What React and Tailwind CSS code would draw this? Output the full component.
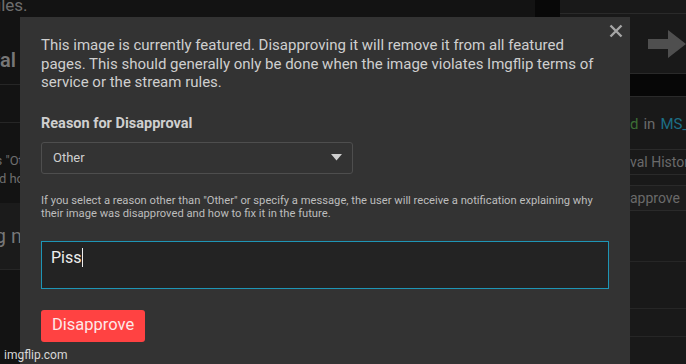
import React from "react";

const App = () => {
  return (
    <div
      className="relative w-[686px] h-[364px] overflow-hidden bg-[#131313]"
      style={{ fontFamily: "Roboto, 'Liberation Sans', sans-serif" }}
    >
      {/* page behind the modal */}
      <div className="flex h-full">
        <div className="w-[535px] shrink-0 text-[#6e6e6e]">
          <div className="h-[17px] overflow-hidden">
            <p className="text-[17px] leading-[17px] -mt-[3px] -ml-[14px]">rules.</p>
          </div>
          <div className="h-[68px] border-b border-[#262626] flex items-center pt-[18px]">
            <div className="w-[16px] flex justify-end">
              <span className="text-[20px] font-semibold text-[#777] whitespace-nowrap">Approval</span>
            </div>
          </div>
          <div className="h-[38px] border-b border-[#262626]"></div>
          <div className="h-[80px] pt-[29px] text-[13px] leading-[18px] -ml-[8px]">
            <p>Is "Other"</p>
            <p>ed how</p>
          </div>
          <div className="h-[67px] bg-[#1b1b1b] border-b border-[#262626] flex items-center">
            <span className="text-[20px] -ml-[10px] text-[#777]">ig me</span>
          </div>
        </div>
        <div className="w-[25px] shrink-0 bg-[#080808]"></div>
        <div className="flex-1 min-w-0 overflow-hidden bg-[#191919] text-[#6a6a6a] text-[14px]">
          <div className="h-[14px] border-b border-[#2a2a2a]"></div>
          <div className="h-[60px] border-b border-[#2a2a2a] flex items-center pl-[88px]">
            <svg width="40" height="28" viewBox="0 0 40 28" className="shrink-0">
              <path d="M0 9 H20 V0 L38 14 L20 28 V19 H0 Z" fill="#4f4f4f" />
            </svg>
          </div>
          <div className="h-[23px] bg-[#070707] border-b border-[#2a2a2a]"></div>
          <div className="h-[53px] border-b border-[#2a2a2a] flex items-center pt-[3px] pl-[70px] text-[15px] whitespace-nowrap">
            <span className="text-[#3c6e35]">d</span>
            <span className="ml-[5px]">in</span>
            <span className="ml-[5px] text-[#1d6f86]">MS_memes</span>
          </div>
          <div className="h-[25px] border-b border-[#2a2a2a] flex items-center pl-[70px] whitespace-nowrap">val History</div>
          <div className="h-[11px] border-b border-[#2a2a2a]"></div>
          <div className="h-[25px] bg-[#1d1d1d] border-b border-[#2a2a2a] flex items-center pl-[70px]">approve</div>
          <div className="h-[51px] border-b border-[#262626]"></div>
          <div className="h-[47px] border-b border-[#262626]"></div>
          <div className="h-[28px] border-b border-[#262626]"></div>
        </div>
      </div>

      {/* modal */}
      <div className="absolute left-[20px] top-[17px] w-[610px] h-[360px] bg-[#333333] px-[21px] pt-[19px]">
        <button className="absolute right-[6px] top-[6px] w-[16px] h-[16px] flex items-center justify-center">
          <svg width="14" height="14" viewBox="0 0 14 14">
            <path d="M1.5 1.5 L12.5 12.5 M12.5 1.5 L1.5 12.5" stroke="#a6a6a6" strokeWidth="2.4" />
          </svg>
        </button>
        <p className="text-[15px] leading-[18.5px] text-[#cfcfcf]">
          This image is currently featured. Disapproving it will remove it from all featured pages. This should generally only be done when the image violates Imgflip terms of service or the stream rules.
        </p>
        <p className="mt-[23px] text-[14.5px] font-bold text-[#cfcfcf] leading-[18px]">Reason for Disapproval</p>
        <div className="mt-[9px] w-[312px] h-[32px] border border-[#4e4e4e] rounded-[3px] flex items-center justify-between pl-[11px] pr-[10px]">
          <span className="text-[13px] text-[#cfcfcf]">Other</span>
          <svg width="11" height="7" viewBox="0 0 11 7">
            <path d="M0 0 H11 L5.5 6.5 Z" fill="#cfcfcf" />
          </svg>
        </div>
        <p className="mt-[20px] max-w-[560px] text-[11.2px] leading-[13px] text-[#bdbdbd]">
          If you select a reason other than "Other" or specify a message, the user will receive a notification explaining why their image was disapproved and how to fix it in the future.
        </p>
        <div className="mt-[21px] w-[568px] h-[48px] bg-[#232323] border border-[#1e95b5] px-[9px] pt-[4px]">
          <span className="text-[16px] text-[#eeeeee] leading-[20px]">Piss</span>
          <span className="inline-block w-[1px] h-[19px] bg-[#eeeeee] align-[-4px]"></span>
        </div>
        <button className="mt-[21px] h-[32px] px-[11px] bg-[#ff4242] rounded-[3px] text-[16.5px] text-[#fde8e8]">
          Disapprove
        </button>
      </div>

      <span className="absolute left-[4px] top-[346px] text-[12px] text-[#d8d8d8]">imgflip.com</span>
    </div>
  );
};

export default App;
